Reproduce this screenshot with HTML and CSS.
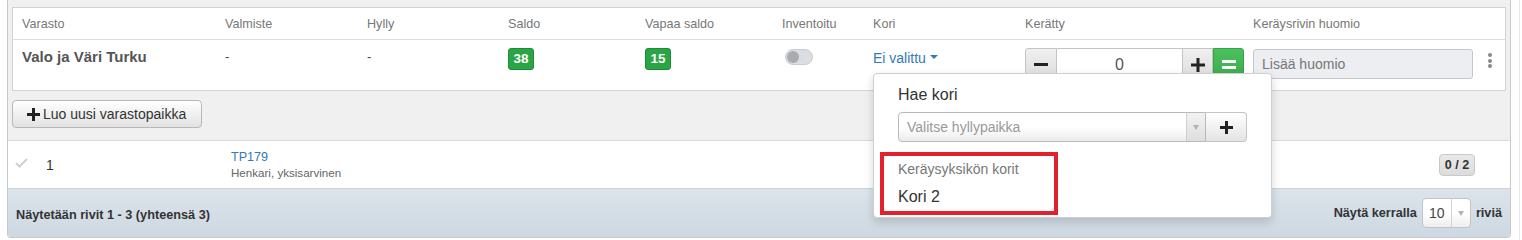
FILE: index.html
```html
<!DOCTYPE html>
<html lang="fi">
<head>
<meta charset="utf-8">
<title>Varastopaikat</title>
<link rel="stylesheet" href="styles.css">
</head>
<body>
<div class="page">
  <div class="panel">
    <div class="detail">
      <div class="card">
        <div class="grid head">
          <div class="c">Varasto</div>
          <div class="c">Valmiste</div>
          <div class="c">Hylly</div>
          <div class="c">Saldo</div>
          <div class="c">Vapaa saldo</div>
          <div class="c">Inventoitu</div>
          <div class="c">Kori</div>
          <div class="c">Kerätty</div>
          <div class="c">Keräysrivin huomio</div>
          <div class="c"></div>
        </div>
        <div class="grid row">
          <div class="c name">Valo ja Väri Turku</div>
          <div class="c dash">-</div>
          <div class="c dash">-</div>
          <div class="c"><span class="badge">38</span></div>
          <div class="c"><span class="badge">15</span></div>
          <div class="c"><span class="toggle"><span class="knob"></span></span></div>
          <div class="c kori">
            <a class="link">Ei valittu<span class="caret"></span></a>
            <div class="dropdown">
              <div class="dd-title">Hae kori</div>
              <div class="dd-search">
                <div class="select2">
                  <span class="ph">Valitse hyllypaikka</span>
                  <span class="s2-arrow"><span class="tri"></span></span>
                </div>
                <button class="dd-add"><svg width="13" height="13" viewBox="0 0 13 13"><rect x="5" y="0" width="3" height="13"/><rect x="0" y="5" width="13" height="3"/></svg></button>
              </div>
              <div class="dd-group">
                <div class="dd-header">Keräysyksikön korit</div>
                <div class="dd-item">Kori 2</div>
              </div>
            </div>
          </div>
          <div class="c">
            <div class="counter">
              <span class="cbtn minus"><svg width="14" height="3" viewBox="0 0 14 3"><rect width="14" height="3"/></svg></span>
              <span class="cval">0</span>
              <span class="cbtn plus"><svg width="14" height="14" viewBox="0 0 14 14"><rect x="5.5" y="0" width="3" height="14"/><rect x="0" y="5.5" width="14" height="3"/></svg></span>
              <span class="cbtn eq"><svg width="14" height="9" viewBox="0 0 14 9"><rect y="0" width="14" height="3"/><rect y="6" width="14" height="3"/></svg></span>
            </div>
          </div>
          <div class="c"><div class="note">Lisää huomio</div></div>
          <div class="c"><span class="kebab"><i></i><i></i><i></i></span></div>
        </div>
      </div>
      <button class="btn-new"><svg width="13" height="13" viewBox="0 0 13 13"><rect x="5" y="0" width="3" height="13"/><rect x="0" y="5" width="13" height="3"/></svg>Luo uusi varastopaikka</button>
    </div>
    <div class="item">
      <span class="chk"><svg width="13" height="10" viewBox="0 0 13 10"><polyline points="1,5 4.5,8.5 12,1" fill="none" stroke="#cfcfcf" stroke-width="2"/></svg></span>
      <span class="num">1</span>
      <div class="prod">
        <a class="plink">TP179</a>
        <div class="pdesc">Henkari, yksisarvinen</div>
      </div>
      <span class="count">0 / 2</span>
    </div>
    <div class="footer">
      <span class="ftext">Näytetään rivit 1 - 3 (yhteensä 3)</span>
      <div class="pager">
        <span>Näytä kerralla</span>
        <span class="psel"><span class="pval">10</span><span class="parr"><span class="tri"></span></span></span>
        <span>riviä</span>
      </div>
    </div>
  </div>
  <div class="side"></div>
</div>
</body>
</html>
```
FILE: styles.css
```css
* { box-sizing: border-box; }
body {
  margin: 0;
  font-family: "Liberation Sans", Arial, sans-serif;
  color: #333;
  background: #fff;
}
.page {
  display: flex;
  height: 240px;
  padding-left: 7px;
}
.panel {
  width: 1504px;
  border: 1px solid #c9c9c9;
  border-top: none;
  border-radius: 0 0 4px 4px;
  align-self: flex-start;
}
.side {
  margin-left: 8px;
  border-left: 1px solid #e8e8e8;
  height: 240px;
}
.detail {
  background: #f0f0f0;
  padding: 7px 4px 12px;
  border-bottom: 1px solid #dadada;
}
.card {
  background: #fff;
  border: 1px solid #d3d3d3;
}
.grid {
  display: grid;
  grid-template-columns: 203px 142px 141px 137px 137px 91px 152px 228px 234px 27px;
}
.head {
  height: 32px;
  border-bottom: 1px solid #dcdcdc;
}
.head .c {
  display: flex;
  align-items: center;
  font-size: 12.6px;
  color: #777;
  padding-left: 9px;
}
.row {
  height: 50px;
}
.row .c {
  padding: 8px 0 0 9px;
  font-size: 13px;
  line-height: 18px;
}
.row .name {
  font-size: 15px;
  font-weight: bold;
  color: #555;
}
.dash { color: #444; }
.badge {
  display: inline-block;
  width: 26px;
  height: 22px;
  border: 1px solid #1f8b39;
  border-radius: 3px;
  background: #2aa546;
  color: #fff;
  font-weight: bold;
  font-size: 13.5px;
  line-height: 20px;
  text-align: center;
}
.toggle {
  display: block;
  position: relative;
  width: 28px;
  height: 16px;
  margin: 1px 0 0 3px;
  border-radius: 8px;
  background: #dadde2;
  border: 1px solid #c9ccd0;
}
.knob {
  position: absolute;
  left: 1px;
  top: 1px;
  width: 12px;
  height: 12px;
  border-radius: 50%;
  background: #a9abae;
}
.kori { position: relative; }
.link {
  color: #337ab7;
  font-size: 14px;
  line-height: 20px;
  display: inline-flex;
  align-items: center;
}
.caret {
  display: inline-block;
  margin-left: 4px;
  margin-top: -2px;
  border-top: 4px solid #337ab7;
  border-left: 4px solid transparent;
  border-right: 4px solid transparent;
}
.dropdown {
  position: absolute;
  left: 9px;
  top: 33px;
  z-index: 5;
  width: 399px;
  height: 145px;
  background: #fff;
  border: 1px solid #cfcfcf;
  border-radius: 4px;
  box-shadow: 0 4px 10px rgba(0, 0, 0, 0.16);
  padding: 11px 24px 2px;
}
.dd-title {
  font-size: 16px;
  line-height: 20px;
  color: #333;
}
.dd-search {
  display: flex;
  margin-top: 7px;
  height: 30px;
}
.select2 {
  width: 309px;
  display: flex;
  border: 1px solid #b9b9b9;
  border-radius: 4px 0 0 4px;
  background: linear-gradient(#fff 50%, #ececec);
}
.ph {
  flex: 1;
  padding-left: 8px;
  font-size: 14px;
  line-height: 28px;
  color: #999;
}
.s2-arrow {
  width: 19px;
  border-left: 1px solid #cfcfcf;
  background: linear-gradient(#f2f2f2, #dedede);
  display: flex;
  align-items: center;
  justify-content: center;
}
.tri {
  display: block;
  border-top: 5px solid #b3b3b3;
  border-left: 3px solid transparent;
  border-right: 3px solid transparent;
}
.dd-add {
  width: 41px;
  height: 30px;
  border: 1px solid #c4c4c4;
  border-left: none;
  border-radius: 0 4px 4px 0;
  background: linear-gradient(#fff, #e4e4e4);
  display: flex;
  align-items: center;
  justify-content: center;
  padding: 0;
  fill: #222;
}
.dd-group {
  margin: 10px 0 0 -18px;
  width: 178px;
  height: 63px;
  border: 4px solid #e2222b;
  padding: 4px 0 0 14px;
}
.dd-header {
  font-size: 14px;
  line-height: 18px;
  color: #777;
}
.dd-item {
  margin-top: 9px;
  font-size: 16px;
  line-height: 20px;
  color: #333;
}
.counter {
  display: flex;
  width: 219px;
  height: 33px;
}
.cbtn {
  display: flex;
  align-items: center;
  justify-content: center;
  border: 1px solid #c4c4c4;
  background: linear-gradient(#f0f0f0, #dcdcdc);
  fill: #222;
}
.minus {
  width: 32px;
  border-radius: 3px 0 0 3px;
}
.cval {
  width: 125px;
  border-top: 1px solid #c4c4c4;
  border-bottom: 1px solid #c4c4c4;
  text-align: center;
  font-size: 16px;
  line-height: 31px;
  color: #555;
}
.plus { width: 31px; }
.eq {
  width: 31px;
  border-color: #35a347;
  background: linear-gradient(#4cc05c, #3aaa4b);
  fill: #fff;
  border-radius: 0 3px 3px 0;
}
.note {
  width: 220px;
  height: 30px;
  margin-top: 1px;
  border: 1px solid #c4c7cb;
  border-radius: 3px;
  background: #eceef1;
  font-size: 14px;
  line-height: 28px;
  color: #777;
  padding-left: 8px;
}
.kebab {
  display: flex;
  flex-direction: column;
  gap: 1.5px;
  margin: 5px 0 0 1px;
  width: 4px;
}
.kebab i {
  display: block;
  width: 4px;
  height: 4px;
  border-radius: 50%;
  background: #888;
}
.btn-new {
  display: flex;
  align-items: center;
  gap: 3px;
  margin-top: 9px;
  width: 190px;
  height: 28px;
  padding: 0 0 0 14px;
  border: 1px solid #b8b8b8;
  border-radius: 4px;
  background: linear-gradient(#fff, #e2e2e2);
  font-family: "Liberation Sans", Arial, sans-serif;
  font-size: 14px;
  color: #333;
  fill: #222;
}
.item {
  display: flex;
  align-items: center;
  height: 48px;
  border-bottom: 1px solid #cdd3d8;
  background: #fff;
}
.chk {
  width: 30px;
  padding-left: 7px;
  display: flex;
  margin-top: -3px;
}
.num {
  width: 185px;
  padding-left: 8px;
  font-size: 14px;
}
.prod {
  flex: 1;
  padding-left: 8px;
  margin-top: -1px;
}
.plink {
  display: block;
  color: #337ab7;
  font-size: 12.6px;
  line-height: 16px;
}
.pdesc {
  font-size: 11.6px;
  line-height: 15px;
  color: #666;
}
.count {
  width: 36px;
  height: 22px;
  margin-right: 35px;
  border: 1px solid #c9c9c9;
  border-radius: 4px;
  background: linear-gradient(#e9e9e9, #dcdcdc);
  font-size: 12.6px;
  font-weight: bold;
  line-height: 20px;
  text-align: center;
  color: #333;
}
.footer {
  display: flex;
  align-items: center;
  justify-content: space-between;
  height: 48px;
  padding: 0 8px;
  background: linear-gradient(#dce4eb, #cdd8e2);
  border-radius: 0 0 3px 3px;
  font-size: 12.7px;
  font-weight: bold;
  color: #333;
}
.ftext { margin-top: 3px; }
.pager {
  display: flex;
  align-items: center;
  gap: 5px;
}
.psel {
  display: flex;
  width: 49px;
  height: 30px;
  border: 1px solid #c4c4c4;
  border-radius: 4px;
  background: linear-gradient(#fff 50%, #eee);
  font-weight: normal;
}
.pval {
  flex: 1;
  padding-left: 6px;
  font-size: 14px;
  line-height: 28px;
  color: #444;
}
.parr {
  width: 19px;
  border-left: 1px solid #d4d4d4;
  display: flex;
  align-items: center;
  justify-content: center;
}
```
